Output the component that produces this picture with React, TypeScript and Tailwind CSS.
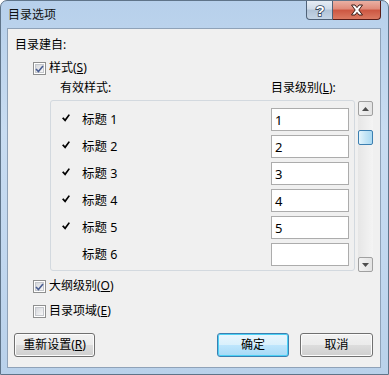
import React from "react";

const font = "font-['Noto_Sans','Noto_Sans_CJK_SC',sans-serif]";

function CheckMark({ className }: { className?: string }) {
  return (
    <svg width="8" height="8" viewBox="0 0 8 8" className={className}>
      <path d="M0 4.2 L1.5 3.2 L3 5 L6.6 0.2 L8 1 L3.2 7.8 Z" fill="#000" />
    </svg>
  );
}

function Checkbox({ checked }: { checked?: boolean }) {
  return (
    <div className="relative h-[13px] w-[13px] shrink-0 border border-[#8e8f8f] bg-white">
      <div className="absolute inset-[1px] border border-[#c4c7cc] bg-[linear-gradient(135deg,#d6d8dc,#f7f7f8)]" />
      {checked && (
        <svg width="9" height="8" viewBox="0 0 9 8" className="absolute left-[1px] top-[2px]">
          <path d="M1 4 L3.4 6.5 L8 1" fill="none" stroke="#4a5e92" strokeWidth="1.6" />
        </svg>
      )}
    </div>
  );
}

function WinButton({
  children,
  def,
  className,
}: {
  children: React.ReactNode;
  def?: boolean;
  className?: string;
}) {
  return (
    <div
      className={`flex h-[24px] items-center justify-center rounded-[3px] border text-[12px] leading-[16px] text-black ${
        def
          ? "border-[#3c7fb1] bg-[linear-gradient(to_bottom,#eaf6fd_0%,#d9f0fc_50%,#bee6fd_50%,#a7d9f5_100%)] shadow-[inset_0_0_0_1px_#4cd1f5]"
          : "border-[#707070] bg-[linear-gradient(to_bottom,#f2f2f2_0%,#ebebeb_50%,#dddddd_50%,#cfcfcf_100%)] shadow-[inset_0_0_0_1px_#fcfcfc]"
      } ${className ?? ""}`}
    >
      {children}
    </div>
  );
}

function ScrollArrow({ up }: { up?: boolean }) {
  return (
    <div className="flex h-[15px] w-[15px] items-center justify-center rounded-[2px] border border-[#a0a0a0] bg-[linear-gradient(to_right,#f2f2f2,#e3e3e3)]">
      <svg width="7" height="4" viewBox="0 0 7 4">
        <path d={up ? "M0 4 L3.5 0 L7 4 Z" : "M0 0 L3.5 4 L7 0 Z"} fill="#4d4d4d" />
      </svg>
    </div>
  );
}

const levels = [
  { name: "标题 1", level: "1", on: true },
  { name: "标题 2", level: "2", on: true },
  { name: "标题 3", level: "3", on: true },
  { name: "标题 4", level: "4", on: true },
  { name: "标题 5", level: "5", on: true },
  { name: "标题 6", level: "", on: false },
];

export default function App() {
  return (
    <div className={`h-[375px] w-[389px] bg-white ${font}`}>
      <div className="flex h-[375px] w-[389px] flex-col rounded-t-[7px] border border-[#5f7489] bg-[linear-gradient(to_bottom,#b7d0eb,#c8dcf1_35%,#c1d7ef_70%,#b9d1ea)]">
        {/* Title bar */}
        <div className="flex h-[27px] items-start">
          <div className="ml-[7px] mt-[6px] flex-1 text-[12px] leading-[16px] text-[#111]">目录选项</div>
          <div className="mr-[7px] flex">
            <div className="flex h-[19px] w-[27px] items-center justify-center rounded-bl-[4px] border border-t-0 border-[#4f6278] bg-[linear-gradient(to_bottom,#e6edf5_0%,#cfdbe8_45%,#b1c3d7_50%,#c5d5e6_100%)]">
              <svg width="12" height="16" viewBox="0 0 12 16">
                <text
                  x="6"
                  y="13.5"
                  textAnchor="middle"
                  fontSize="15"
                  fontWeight="bold"
                  fontFamily="Liberation Sans, sans-serif"
                  fill="#fff"
                  stroke="#33465c"
                  strokeWidth="1.6"
                  paintOrder="stroke"
                >
                  ?
                </text>
              </svg>
            </div>
            <div className="flex h-[19px] w-[48px] items-center justify-center rounded-br-[4px] border border-l-0 border-t-0 border-[#5a1d18] bg-[linear-gradient(to_bottom,#eab0a3_0%,#e08a79_45%,#cc5641_50%,#db7a62_100%)]">
              <svg width="14" height="12" viewBox="0 0 14 12">
                <path
                  d="M1.5 1 L5 1 L7 3.6 L9 1 L12.5 1 L8.8 6 L12.5 11 L9 11 L7 8.4 L5 11 L1.5 11 L5.2 6 Z"
                  fill="#fff"
                  stroke="#3c1c17"
                  strokeWidth="1"
                  strokeLinejoin="round"
                />
              </svg>
            </div>
          </div>
        </div>

        {/* Client area */}
        <div className="mx-[6px] mr-[7px] mb-[6px] flex h-[340px] flex-col border border-[#8fa2b8] bg-[#f0f0f0] pb-[10px] pr-[7px] pt-[8px] text-[12px] leading-[16px] text-black">
          <div className="h-[16px] pl-[7px]">目录建自:</div>

          <div className="mt-[7px] flex h-[16px] items-center gap-[3px] pl-[25px]">
            <Checkbox checked />
            <span>
              样式(<span className="underline">S</span>)
            </span>
          </div>

          <div className="mt-[4px] flex h-[16px] pl-[52px]">
            <span className="w-[211px]">有效样式:</span>
            <span>
              目录级别(<span className="underline">L</span>):
            </span>
          </div>

          <div className="mt-[4px] flex h-[172px] gap-[3px] pl-[42px]">
            <div className="flex h-[171px] w-[306px] flex-col gap-[4px] rounded-[3px] border border-[#d3d9df] pt-[7px]">
              {levels.map((l) => (
                <div key={l.name} className="flex h-[23px] items-center">
                  <div className="w-[31px] pb-[3px] pl-[11px]">{l.on && <CheckMark />}</div>
                  <div className="w-[189px] text-[12.5px]">{l.name}</div>
                  <div className="flex h-[23px] w-[78px] items-center border border-[#acacac] bg-white pl-[3px] text-[13px]">
                    {l.level}
                  </div>
                </div>
              ))}
            </div>
            <div className="mt-[1px] flex h-[171px] w-[15px] flex-col bg-[linear-gradient(to_right,#e6e6e6,#f4f4f4)]">
              <ScrollArrow up />
              <div className="mt-[14px] h-[15px] w-[15px] rounded-[2px] border border-[#3c7fb1] bg-[linear-gradient(to_right,#e3f4fc,#c4e5f6_50%,#a9d9f2)]" />
              <div className="flex-1" />
              <ScrollArrow />
            </div>
          </div>

          <div className="mt-[6px] flex h-[16px] items-center gap-[3px] pl-[25px]">
            <Checkbox checked />
            <span>
              大纲级别(<span className="underline">O</span>)
            </span>
          </div>

          <div className="mt-[9px] flex h-[16px] items-center gap-[3px] pl-[25px]">
            <Checkbox />
            <span>
              目录项域(<span className="underline">E</span>)
            </span>
          </div>

          <div className="mt-[14px] flex h-[24px] pl-[6px]">
            <WinButton className="w-[81px]">
              重新设置(<span className="underline">R</span>)
            </WinButton>
            <div className="flex-1" />
            <WinButton def className="w-[72px]">
              确定
            </WinButton>
            <WinButton className="ml-[11px] w-[73px]">取消</WinButton>
          </div>
        </div>
      </div>
    </div>
  );
}
